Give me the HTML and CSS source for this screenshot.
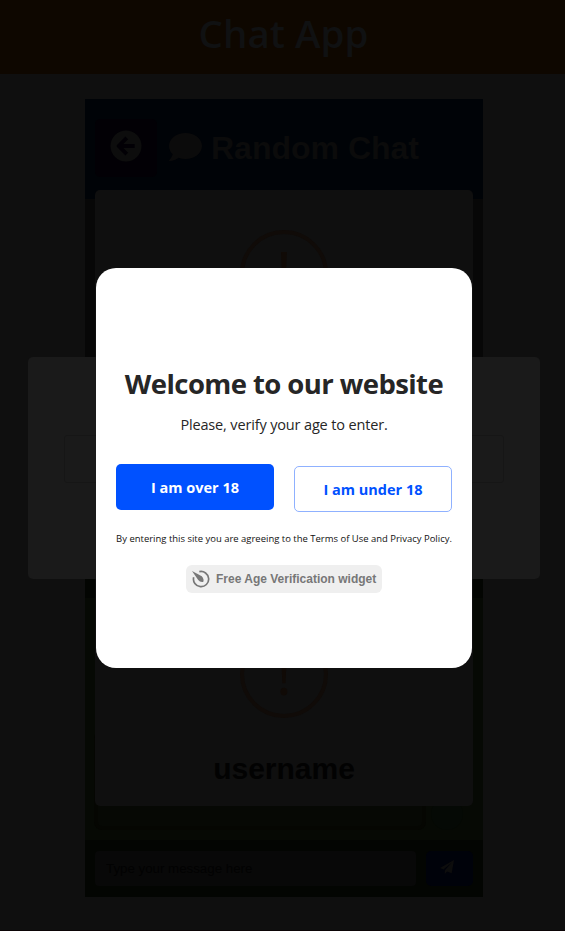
FILE: index.html
```
<!DOCTYPE html>
<html lang="en">
<head>
  <meta charset="UTF-8">
  <meta name="viewport" content="width=device-width, initial-scale=1.0">
  <title>Chat App</title>
  <link rel="stylesheet" href="styles.css">
</head>
<body>

<header class="app-header">
  <h1>Chat App</h1>
</header>

<main class="chat">
  <div class="chat-header">
    <button class="back-btn">
      <svg viewBox="0 0 512 512" width="32" height="32">
        <circle cx="256" cy="256" r="248" fill="currentColor"/>
        <path d="M268 126L138 256l130 130M145 256h250" fill="none" stroke="#020005" stroke-width="62" stroke-linejoin="round"/>
      </svg>
    </button>
    <svg class="bubble" viewBox="0 0 512 512" width="33" height="32" preserveAspectRatio="none">
      <path fill="currentColor" d="M256 32C114.600 32 0 125.100 0 240c0 49.600 21.400 95 57 130.700C44.500 421.100 2.700 466 2.200 466.500c-2.200 2.300-2.800 5.700-1.500 8.700S4.800 480 8 480c66.300 0 116-31.800 140.600-51.400 32.700 12.300 69 19.400 107.400 19.400 141.400 0 256-93.100 256-208S397.400 32 256 32z"/>
    </svg>
    <h2>Random Chat</h2>
  </div>
  <div class="messages"></div>
  <div class="chat-form"></div>
  <div class="messages own">
    <div class="message"></div>
    <div class="avatar"></div>
  </div>
  <div class="chat-form">
    <input type="text" placeholder="Type your message here">
    <button class="send-btn">
      <svg viewBox="0 0 14 14" width="14" height="14">
        <path fill="currentColor" d="M14 0L0 8l3.400 1.600L11.500 2.800 4.800 10.400V14l2.300-2.500 4.600 1.700z"/>
      </svg>
    </button>
  </div>
</main>

<!-- Username alert -->
<div class="alert">
  <div class="alert-icon">!</div>
  <div class="alert-icon">!</div>
  <h2>username</h2>
</div>

<!-- Username prompt -->
<div class="prompt">
  <div class="prompt-input"></div>
</div>

<!-- Age verification -->
<div class="age-modal">
  <h2>Welcome to our website</h2>
  <p class="age-text">Please, verify your age to enter.</p>
  <div class="age-buttons">
    <button class="btn btn-over">I am over 18</button>
    <button class="btn btn-under">I am under 18</button>
  </div>
  <p class="age-terms">By entering this site you are agreeing to the Terms of Use and Privacy Policy.</p>
  <a class="age-widget">
    <svg viewBox="0 0 18 18" width="18" height="18">
      <path d="M7.300 1.700A7.600 7.600 0 1 1 1.700 7.200" fill="none" stroke="#777" stroke-width="1.700"/>
      <path d="M0 1L9.800 6.200Q12.400 9.500 11.200 11.900Q8 12.400 6 9.700Z" fill="#777"/>
    </svg>
    <span>Free Age Verification widget</span>
  </a>
</div>

</body>
</html>
```
FILE: styles.css
```
* {
  box-sizing: border-box;
}
body {
  margin: 0;
  height: 931px;
  overflow: hidden;
  background-color: #0f0f0f;
  border-bottom: 1px solid #0b0406;
  font-family: "Liberation Sans", Arial, sans-serif;
}
h1, h2, p {
  margin: 0;
}
button {
  border: none;
  font-family: inherit;
}
.app-header {
  height: 74px;
  padding: 6px 0 0 2px;
  background-color: #0e0700;
  color: #101112;
  text-align: center;
}
.app-header h1 {
  font: 600 38.5px/54px "Open Sans", sans-serif;
  white-space: nowrap;
}
.chat {
  display: flex;
  flex-direction: column;
  width: 398px;
  height: 798px;
  margin: 25px 0 0 85px;
}
.chat-header {
  display: flex;
  height: 100px;
  padding: 20px 10px;
  background-color: #000307;
  color: #0b0b0b;
}
.back-btn {
  width: 62px;
  height: 58px;
  padding: 0 0 4px;
  border-radius: 5px;
  background-color: #020005;
  color: #0d0d0d;
}
.back-btn svg {
  display: block;
  margin: 0 auto;
}
.bubble {
  margin: 12px 9px 0 12px;
}
.chat-header h2 {
  font-size: 32px;
  line-height: 58px;
}
.messages {
  height: 342px;
  background-color: #070707;
}
.messages.own {
  display: flex;
  align-items: flex-end;
  gap: 5px;
  height: 242px;
  padding: 0 20px 10px 9px;
  background-color: #060904;
}
.message {
  width: 332px;
  height: 100px;
  border: 4px solid #050602;
  border-radius: 8px;
  background-color: #060804;
}
.avatar {
  width: 32px;
  height: 32px;
  border-radius: 50%;
  background-color: #050905;
}
.chat-form {
  display: flex;
  justify-content: space-between;
  height: 57px;
  padding: 11px 10px;
  background-color: #030502;
}
.chat-form input {
  width: 321px;
  height: 35px;
  padding: 0 11px;
  border: none;
  border-radius: 4px;
  background-color: #080808;
  font: 13.3px "Liberation Sans", Arial, sans-serif;
}
.chat-form input::placeholder {
  color: #020202;
}
.send-btn {
  width: 47px;
  height: 35px;
  padding: 0 5px 0 0;
  border-radius: 5px;
  background-color: #00020a;
  color: #0d0d0d;
}
.alert {
  position: absolute;
  top: 190px;
  left: 95px;
  width: 378px;
  height: 616px;
  padding-top: 40px;
  border-radius: 5px;
  background-color: #0f0f0f;
  text-align: center;
}
.alert-icon {
  width: 88px;
  height: 88px;
  margin: 0 auto 312px;
  border: 4px solid #100b08;
  border-radius: 50%;
  color: #100a06;
  font: 60px/76px "Open Sans", sans-serif;
}
.alert-icon + .alert-icon {
  margin-bottom: 33px;
}
.alert h2 {
  color: #020202;
  font-size: 30px;
  line-height: 36px;
}
.prompt {
  position: absolute;
  top: 357px;
  left: 28px;
  width: 512px;
  height: 222px;
  padding: 78px 36px;
  border-radius: 5px;
  background-color: #1a1a1a;
}
.prompt-input {
  height: 48px;
  border: 1px solid #161616;
  border-radius: 3px;
}
.age-modal {
  position: absolute;
  top: 268px;
  left: 96px;
  display: flex;
  flex-direction: column;
  align-items: center;
  width: 376px;
  height: 400px;
  padding-top: 97px;
  border-radius: 20px;
  background-color: #fff;
  color: #262626;
  font-family: "Open Sans", sans-serif;
  white-space: nowrap;
}
.age-modal h2 {
  font-size: 27.5px;
  line-height: 38px;
  letter-spacing: -0.58px;
}
.age-text {
  margin-top: 12px;
  font-size: 14.5px;
  line-height: 20px;
  letter-spacing: -0.15px;
}
.age-buttons {
  display: flex;
  gap: 20px;
  margin-top: 29px;
}
.btn {
  width: 158px;
  height: 46px;
  padding: 0;
  border-radius: 5px;
  font-size: 14.5px;
  font-weight: bold;
}
.btn-over {
  background-color: #0051ff;
  color: #fff;
}
.btn-under {
  margin-top: 2px;
  border: 1px solid #8fb1ff;
  background-color: #fff;
  color: #0051ff;
}
.age-terms {
  margin-top: 20px;
  color: #111;
  font-size: 9.47px;
  line-height: 14px;
}
.age-widget {
  display: flex;
  align-items: center;
  gap: 6px;
  width: 196px;
  height: 28px;
  margin-top: 19px;
  padding-left: 6px;
  border-radius: 6px;
  background-color: #efefef;
  color: #777;
  font: bold 12px "Liberation Sans", Arial, sans-serif;
}
```
